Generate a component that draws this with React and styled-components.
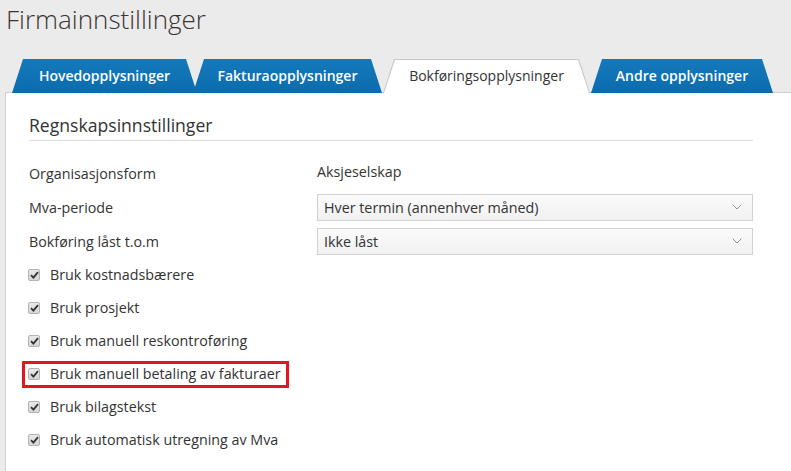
import React from "react";
import styled, { createGlobalStyle } from "styled-components";
import { ChevronDown } from "lucide-react";

const GlobalStyle = createGlobalStyle`
    body {
        margin: 0;
        background-color: #ebebeb;
        font-family: "Open Sans", "DejaVu Sans", sans-serif;
        color: #333;
    }
`;

const Page = styled.div`
    width: 791px;
    height: 471px;
    overflow: hidden;
`;

const Title = styled.h1`
    margin: 0;
    padding: 2px 0 0 6px;
    height: 57px;
    box-sizing: border-box;
    font-size: 26px;
    font-weight: 300;
    line-height: 34px;
    color: #3a3433;
`;

const TabBar = styled.div`
    display: flex;
    align-items: flex-end;
    height: 35px;
    padding-left: 12px;
    box-sizing: border-box;
    position: relative;
    z-index: 2;
`;

const Tab = styled.div`
    position: relative;
    flex: none;
    width: ${(p) => p.$width}px;
    height: 34px;
    margin-left: ${(p) => p.$offset}px;
    margin-bottom: -1px;
    display: flex;
    align-items: center;
    justify-content: center;
    padding-bottom: 1px;
    box-sizing: border-box;
    font-size: 14px;
    font-weight: ${(p) => (p.$active ? 400 : 600)};
    color: ${(p) => (p.$active ? "#333" : "#fff")};
    z-index: ${(p) => (p.$active ? 3 : 1)};

    &::before,
    &::after {
        content: "";
        position: absolute;
        inset: 0;
        z-index: -1;
        clip-path: polygon(11px 0, calc(100% - 11px) 0, 100% 100%, 0 100%);
    }

    &::before {
        background: ${(p) =>
            p.$active ? "#c9c9c9" : "linear-gradient(#1479bb, #0b6cad)"};
        border-radius: 5px 5px 0 0;
    }

    &::after {
        display: ${(p) => (p.$active ? "block" : "none")};
        background: #fff;
        inset: 1px 1px 0 1px;
        border-radius: 4px 4px 0 0;
    }
`;

const Panel = styled.div`
    margin-left: 5px;
    min-height: 380px;
    background-color: #fff;
    border-top: 1px solid #cfcfcf;
    border-left: 1px solid #cfcfcf;
    padding: 20px 38px 0 23px;
    position: relative;
    z-index: 1;
`;

const SectionTitle = styled.h2`
    margin: 0;
    padding-bottom: 3px;
    font-size: 17.6px;
    font-weight: 400;
    line-height: 24px;
    color: #333;
    border-bottom: 1px solid #dcdcdc;
`;

const Form = styled.div`
    display: grid;
    grid-template-columns: 288px 1fr;
    grid-auto-rows: 34px;
    margin-top: 15px;
`;

const Label = styled.div`
    display: flex;
    align-items: center;
    font-size: 14.3px;
    color: #333;
`;

const Value = styled.div`
    display: flex;
    align-items: center;
    font-size: 14.3px;
    color: #333;
    padding-bottom: 3px;
`;

const SelectCell = styled.div`
    display: flex;
    align-items: center;
`;

const Select = styled.div`
    width: 100%;
    height: 27px;
    box-sizing: border-box;
    border: 1px solid #d2d2d2;
    background: linear-gradient(#fbfbfb, #f1f1f1);
    display: flex;
    align-items: center;
    justify-content: space-between;
    padding: 0 7px 0 6px;
    font-size: 14.3px;
    color: #333;
`;

const CheckList = styled.div`
    display: flex;
    flex-direction: column;
`;

const CheckRow = styled.label`
    position: relative;
    height: 33px;
    display: flex;
    align-items: center;
    gap: 10px;
    font-size: 14.3px;
    color: #333;

    &::after {
        content: "";
        display: ${(p) => (p.$highlighted ? "block" : "none")};
        position: absolute;
        left: -7px;
        top: 4px;
        width: 267px;
        height: 27px;
        box-sizing: border-box;
        border: 3px solid #e3161f;
    }
`;

const Box = styled.span`
    width: 12px;
    height: 12px;
    box-sizing: border-box;
    border: 1px solid #b3b3b3;
    border-radius: 2px;
    background: linear-gradient(#e9e9e9, #d6d6d6);
    display: flex;
    align-items: center;
    justify-content: center;
    margin-left: -1px;
`;

const Check = () => (
    <svg width="9" height="8" viewBox="0 0 9 8">
        <path d="M1 4.2 L3.4 6.6 L8 1.2" fill="none" stroke="#333" strokeWidth="1.8" />
    </svg>
);

const tabs = [
    { label: "Hovedopplysninger", width: 185, offset: 0 },
    { label: "Fakturaopplysninger", width: 189, offset: -4 },
    { label: "Bokføringsopplysninger", width: 207, offset: 1, active: true },
    { label: "Andre opplysninger", width: 182, offset: 1 },
];

const checks = [
    "Bruk kostnadsbærere",
    "Bruk prosjekt",
    "Bruk manuell reskontroføring",
    "Bruk manuell betaling av fakturaer",
    "Bruk bilagstekst",
    "Bruk automatisk utregning av Mva",
];

const App = () => {
    return (
        <Page>
            <GlobalStyle />
            <Title>Firmainnstillinger</Title>
            <TabBar>
                {tabs.map((t) => (
                    <Tab key={t.label} $width={t.width} $offset={t.offset} $active={t.active}>
                        {t.label}
                    </Tab>
                ))}
            </TabBar>
            <Panel>
                <SectionTitle>Regnskapsinnstillinger</SectionTitle>
                <Form>
                    <Label>Organisasjonsform</Label>
                    <Value>Aksjeselskap</Value>
                    <Label>Mva-periode</Label>
                    <SelectCell>
                        <Select>
                            Hver termin (annenhver måned)
                            <ChevronDown size={16} strokeWidth={1.2} color="#777" />
                        </Select>
                    </SelectCell>
                    <Label>Bokføring låst t.o.m</Label>
                    <SelectCell>
                        <Select>
                            Ikke låst
                            <ChevronDown size={16} strokeWidth={1.2} color="#777" />
                        </Select>
                    </SelectCell>
                </Form>
                <CheckList>
                    {checks.map((c, i) => (
                        <CheckRow key={c} $highlighted={i === 3}>
                            <Box>
                                <Check />
                            </Box>
                            {c}
                        </CheckRow>
                    ))}
                </CheckList>
            </Panel>
        </Page>
    );
};

export default App;
